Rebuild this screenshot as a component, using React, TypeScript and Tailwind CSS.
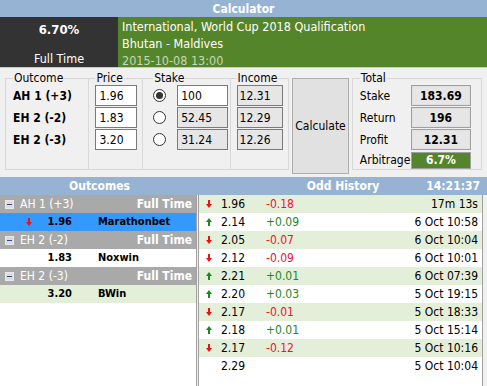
import React from 'react';

const font = { fontFamily: '"DejaVu Sans Condensed", "Liberation Sans", sans-serif' };

const outcomes = [
  { name: 'AH 1 (+3)', price: '1.96', stake: '100', income: '12.31', checked: true },
  { name: 'EH 2 (-2)', price: '1.83', stake: '52.45', income: '12.29', checked: false },
  { name: 'EH 2 (-3)', price: '3.20', stake: '31.24', income: '12.26', checked: false },
];

const history = [
  { v: '1.96', d: '-0.18', t: '17m 13s', dir: 'down' },
  { v: '2.14', d: '+0.09', t: '6 Oct 10:58', dir: 'up' },
  { v: '2.05', d: '-0.07', t: '6 Oct 10:04', dir: 'down' },
  { v: '2.12', d: '-0.09', t: '6 Oct 10:01', dir: 'down' },
  { v: '2.21', d: '+0.01', t: '6 Oct 07:39', dir: 'up' },
  { v: '2.20', d: '+0.03', t: '5 Oct 19:15', dir: 'up' },
  { v: '2.17', d: '-0.01', t: '5 Oct 18:33', dir: 'down' },
  { v: '2.18', d: '+0.01', t: '5 Oct 15:14', dir: 'up' },
  { v: '2.17', d: '-0.12', t: '5 Oct 10:16', dir: 'down' },
  { v: '2.29', d: '', t: '5 Oct 10:04', dir: '' },
];

function Arrow({ dir }: { dir: string }) {
  if (!dir) return <span className="inline-block w-[6px]" />;
  const up = dir === 'up';
  return (
    <svg width="6" height="8" viewBox="0 0 6 8" className="inline-block">
      {up ? (
        <path d="M3 0 L6 4 L4 4 L4 8 L2 8 L2 4 L0 4 Z" fill="#1a8a1a" />
      ) : (
        <path d="M3 8 L6 4 L4 4 L4 0 L2 0 L2 4 L0 4 Z" fill="#ee1111" />
      )}
    </svg>
  );
}

function MinusBox() {
  return (
    <span className="inline-flex h-[9px] w-[9px] items-center justify-center border border-[#e8e8e8] bg-[#dcdcdc]">
      <span className="h-px w-[5px] bg-[#334a8a]" />
    </span>
  );
}

function GroupRow({ name }: { name: string }) {
  return (
    <div className="flex h-[18px] items-center bg-[#a9a9a9] pl-[5px] pr-[4px] text-[12px] text-white">
      <MinusBox />
      <span className="ml-[6px]">{name}</span>
      <span className="ml-auto font-bold">Full Time</span>
    </div>
  );
}

function BetRow({ price, book, bg, arrow }: { price: string; book: string; bg: string; arrow?: string }) {
  return (
    <div className={`flex h-[18px] items-center font-bold ${bg}`}>
      <span className="flex w-[46px] justify-end pr-[14px]">{arrow ? <Arrow dir={arrow} /> : null}</span>
      <span className="w-[26px] text-right">{price}</span>
      <span className="ml-[26px]">{book}</span>
    </div>
  );
}

export default function App() {
  return (
    <div className="h-[386px] w-[487px] overflow-hidden bg-[#f0f0f0] text-[11px] text-black" style={font}>
      {/* Title */}
      <div className="flex h-[17px] items-center justify-center bg-[#97b3d3] text-[12px] font-bold text-white">
        Calculator
      </div>

      {/* Event header */}
      <div className="flex h-[50px]">
        <div className="flex w-[118px] flex-col items-center bg-[#333333] text-white">
          <div className="mt-[4px] text-[13px] font-bold leading-[17px]">6.70%</div>
          <div className="mt-auto text-[12.5px] leading-[17px]">Full Time</div>
        </div>
        <div className="flex flex-1 flex-col bg-[#55852a] pl-[4px] pt-px text-[12.5px] leading-[17px] text-white">
          <div>International, World Cup 2018 Qualification</div>
          <div>Bhutan - Maldives</div>
          <div className="text-[#c9d6b8]">2015-10-08 13:00</div>
        </div>
      </div>
      <div className="h-px bg-[#c8c8c8]" />

      {/* Calculator */}
      <div className="flex h-[109px] px-[5px] pt-[3px]">
        <fieldset className="h-[99px] w-[85px] border border-[#d8d8d8] pl-[7px]">
          <legend className="px-px text-[12px] leading-[14px]">Outcome</legend>
          <div className="flex flex-col gap-px font-bold text-[12px]">
            {outcomes.map((o) => (
              <div key={o.name} className="flex h-[21px] items-center">{o.name}</div>
            ))}
          </div>
        </fieldset>
        <fieldset className="-ml-px h-[99px] w-[55px] border border-[#d8d8d8] pl-[6px]">
          <legend className="px-px text-[12px] leading-[14px]">Price</legend>
          <div className="flex flex-col gap-px">
            {outcomes.map((o) => (
              <div key={o.name} className="flex h-[21px] w-[42px] items-center border border-[#7a7a7a] bg-white pl-[3px] text-[12px]">{o.price}</div>
            ))}
          </div>
        </fieldset>
        <fieldset className="-ml-px h-[99px] w-[89px] border border-[#d8d8d8] pl-[10px]">
          <legend className="px-px text-[12px] leading-[14px]">Stake</legend>
          <div className="flex flex-col gap-px">
            {outcomes.map((o) => (
              <div key={o.name} className="flex h-[21px] items-center">
                <span className="flex h-[13px] w-[13px] items-center justify-center rounded-full border border-[#333333] bg-white">
                  {o.checked ? <span className="h-[7px] w-[7px] rounded-full bg-[#333333]" /> : null}
                </span>
                <span className={`ml-[11px] flex h-[21px] w-[51px] items-center border border-[#7a7a7a] pl-[3px] text-[12px] ${o.checked ? 'bg-white' : 'bg-[#e6e6e6]'}`}>{o.stake}</span>
              </div>
            ))}
          </div>
        </fieldset>
        <fieldset className="-ml-px h-[99px] w-[60px] border border-[#d8d8d8] pl-[6px]">
          <legend className="px-px text-[12px] leading-[14px]">Income</legend>
          <div className="flex flex-col gap-px">
            {outcomes.map((o) => (
              <div key={o.name} className="flex h-[21px] w-[46px] items-center border border-[#7a7a7a] bg-[#e6e6e6] pl-[2px] text-[12px]">{o.income}</div>
            ))}
          </div>
        </fieldset>
        <button className="ml-[3px] mt-[7px] flex h-[96px] w-[57px] items-center justify-center border border-[#adadad] bg-[#e1e1e1] text-[12px]">
          Calculate
        </button>
        <fieldset className="ml-[3px] h-[99px] w-[131px] border border-[#d8d8d8] pl-[7px]">
          <legend className="px-px text-[12px] leading-[14px]">Total</legend>
          <div className="flex flex-col gap-px text-[12px]">
            {[
              ['Stake', '183.69'],
              ['Return', '196'],
              ['Profit', '12.31'],
            ].map(([k, v]) => (
              <div key={k} className="flex h-[21px] items-center">
                <span className="w-[51px]">{k}</span>
                <span className="flex h-[21px] w-[60px] items-center justify-center border-2 border-[#a0a0a0] bg-[#e6e6e6] font-bold outline outline-1 -outline-offset-2 outline-[#e0e0e0]">{v}</span>
              </div>
            ))}
            <div className="flex h-[18px] items-center">
              <span className="w-[51px]">Arbitrage</span>
              <span className="flex h-[17px] w-[60px] items-center justify-center border border-[#a0a0a0] bg-[#55852a] font-bold text-white">6.7%</span>
            </div>
          </div>
        </fieldset>
      </div>

      {/* Outcomes / history header */}
      <div className="flex h-[18px] items-center bg-[#97b3d3] font-bold text-white text-[12px]">
        <div className="w-[199px] text-center">Outcomes</div>
        <div className="relative flex-1 text-center">
          Odd History
          <span className="absolute right-[7px] top-0">14:21:37</span>
        </div>
      </div>

      <div className="flex h-[191px]">
        {/* Outcomes list */}
        <div className="w-[197px] border-r border-[#a0a0a0] bg-white">
          <GroupRow name="AH 1 (+3)" />
          <BetRow price="1.96" book="Marathonbet" bg="bg-[#3399ff]" arrow="down" />
          <GroupRow name="EH 2 (-2)" />
          <BetRow price="1.83" book="Noxwin" bg="bg-white" />
          <GroupRow name="EH 2 (-3)" />
          <BetRow price="3.20" book="BWin" bg="bg-[#e4efd9]" />
        </div>

        {/* Odd history */}
        <div className="ml-px w-[285px] border-x border-[#a0a0a0] bg-white">
          {history.map((h, i) => (
            <div key={i} className={`flex h-[18px] items-center text-[12px] ${i % 2 === 0 ? 'bg-[#e4efd9]' : 'bg-white'}`}>
              <span className="flex w-[22px] justify-end pr-[9px]">
                <Arrow dir={h.dir} />
              </span>
              <span className="w-[45px]">{h.v}</span>
              <span className={h.dir === 'up' ? 'text-[#1a8a1a]' : 'text-[#ee1133]'}>{h.d}</span>
              <span className="ml-auto pr-[4px]">{h.t}</span>
            </div>
          ))}
        </div>
      </div>
    </div>
  );
}
